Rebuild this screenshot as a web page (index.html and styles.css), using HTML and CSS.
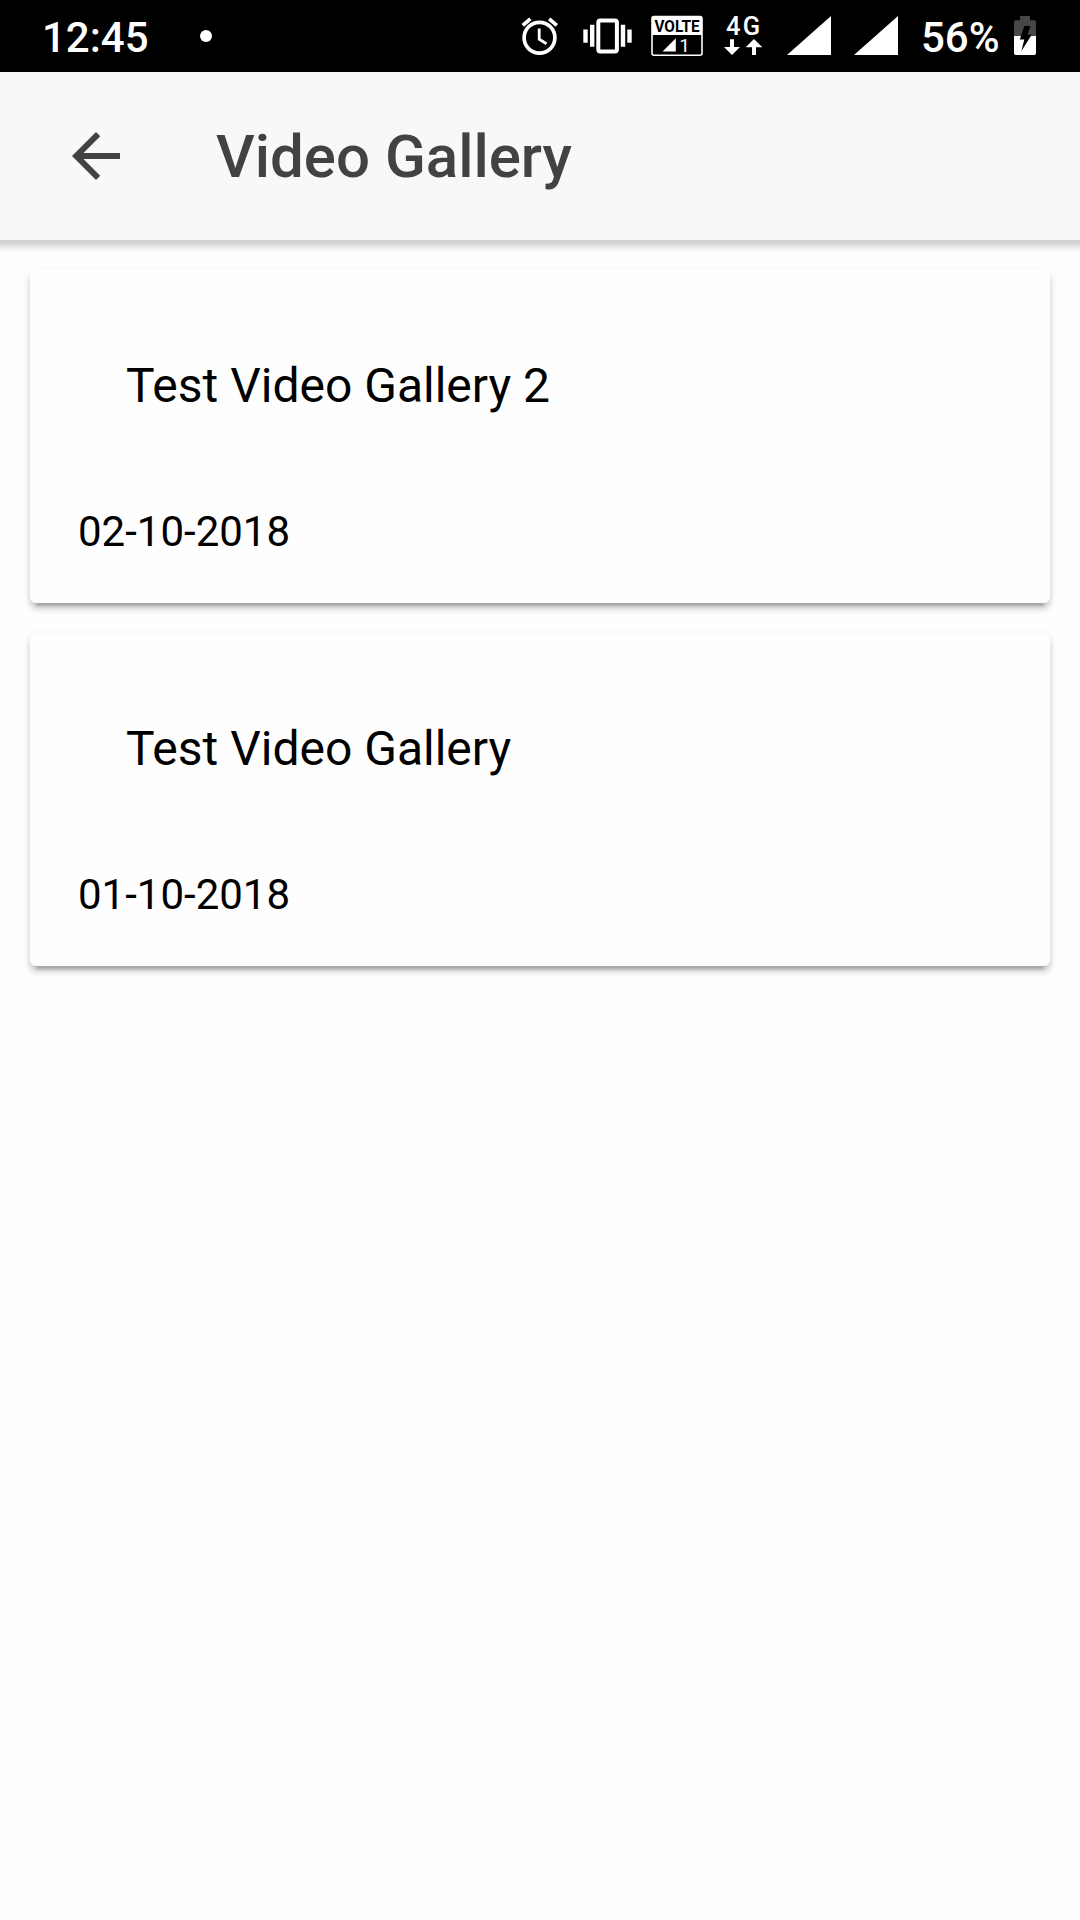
FILE: index.html
```html
<!DOCTYPE html>
<html lang="en">
<head>
<meta charset="utf-8">
<title>Video Gallery</title>
<link rel="stylesheet" href="styles.css">
</head>
<body>
<div class="status-bar">
  <span class="clock">12:45</span>
  <span class="notification-dot"></span>
  <div class="status-icons">
    <svg class="alarm" width="38" height="72" viewBox="521 0 38 72" fill="none" stroke="#fff">
      <circle cx="539.5" cy="37.7" r="15.4" stroke-width="3.7"/>
      <path d="M539.2 28.5v10.8l7.3 4.4" stroke-width="2.8"/>
      <path d="M522.8 25.4l7.6-6.5M556.8 25.4l-7.6-6.5" stroke-width="3.8"/>
    </svg>
    <svg class="vibrate" width="50" height="72" viewBox="583 0 50 72" fill="#fff">
      <rect x="598.3" y="20.4" width="18.6" height="31.2" rx="2" fill="none" stroke="#fff" stroke-width="4"/>
      <path d="M583.3 29.5h4.4v13.2h-4.4zM590 24.8h4.4v22H590zM620.8 24.8h4.4v22h-4.4zM627.3 29.5h4.4v13.2h-4.4z"/>
    </svg>
    <svg class="volte" width="52" height="72" viewBox="651 0 52 72" fill="#fff">
      <rect x="652" y="16.6" width="50" height="38.6" rx="2" fill="none" stroke="#fff" stroke-width="1.6"/>
      <path d="M652 18q0-1.5 2-1.5h46q2 0 2 1.5v17h-50zM662.5 51.5l13.3-13.3v13.3z"/>
      <text x="677" y="32" class="volte-label" textLength="45" lengthAdjust="spacingAndGlyphs">VOLTE</text>
      <text x="684.5" y="52" class="sim-number">1</text>
    </svg>
    <svg class="network" width="40" height="72" viewBox="723 0 40 72" fill="#fff">
      <text x="726" y="34.7" class="network-label" textLength="34">4G</text>
      <path d="M730 39.2h4V47h6l-8 8-8-8h6zM752 55h4v-7.8h6.3L754 39l-8.3 8.2h6.3z"/>
    </svg>
    <svg class="signal" width="44" height="72" viewBox="787 0 44 72" fill="#fff"><path d="M787 55l44-39v39z"/></svg>
    <svg class="signal" width="44" height="72" viewBox="787 0 44 72" fill="#fff"><path d="M787 55l44-39v39z"/></svg>
    <span class="battery-level">56%</span>
    <svg class="battery" width="22" height="72" viewBox="1014 0 22 72">
      <path d="M1014 36V22q0-1.7 1.7-1.7h4.3V16h10v4.3h4.3q1.7 0 1.7 1.7v14z" fill="#474747"/>
      <path d="M1014 36h22v17.3q0 1.7-1.7 1.7h-18.6q-1.7 0-1.7-1.7z" fill="#fff"/>
      <path d="M1024.3 26h6.2l-3 8.7h4.2l-10.4 16.5 3-11.6h-4.5z" fill="#000"/>
    </svg>
  </div>
</div>
<header class="toolbar">
  <svg class="back" width="48" height="48" viewBox="4 4 16 16" fill="#424242"><path d="M20 11H7.83l5.59-5.59L12 4l-8 8 8 8 1.41-1.41L7.83 13H20z"/></svg>
  <h1 class="toolbar-title">Video Gallery</h1>
</header>
<main class="content">
  <article class="card">
    <h2 class="card-title">Test Video Gallery 2</h2>
    <p class="card-date">02-10-2018</p>
  </article>
  <article class="card">
    <h2 class="card-title">Test Video Gallery</h2>
    <p class="card-date">01-10-2018</p>
  </article>
</main>
</body>
</html>
```
FILE: styles.css
```css
* { box-sizing: border-box; }
body {
  margin: 0;
  min-height: 1920px;
  background: #fefefe;
  color: #000;
  font-family: Roboto, sans-serif;
}
svg { display: block; flex: none; }

.status-bar {
  display: flex;
  align-items: center;
  height: 72px;
  padding: 0 44px 0 42px;
  background: #000;
  color: #fff;
  font-size: 42px;
  font-weight: 500;
  line-height: 68px;
}
.clock { width: 158px; padding-top: 4px; }
.notification-dot {
  width: 12px;
  height: 12px;
  border-radius: 50%;
  background: #fff;
}
.status-icons { display: flex; margin-left: auto; }
.vibrate { margin-left: 24px; }
.volte { margin-left: 18px; }
.network { margin-left: 20px; }
.signal { margin-left: 24px; }
.signal + .signal { margin-left: 23px; }
.battery-level { width: 93px; margin-left: 23px; padding-top: 4px; }
.volte-label { font-size: 16px; font-weight: 700; fill: #000; text-anchor: middle; }
.sim-number { font-size: 19px; font-weight: 400; text-anchor: middle; }
.network-label { font-size: 25.5px; font-weight: 500; }

.toolbar {
  position: relative;
  display: flex;
  align-items: center;
  gap: 96px;
  height: 168px;
  padding: 0 72px;
  background: #f8f8f8;
}
.toolbar::after {
  content: "";
  position: absolute;
  top: 100%;
  left: 0;
  right: 0;
  height: 15px;
  background: linear-gradient(#cecece, #d5d5d5 20%, #ebebeb 50%, #f9f9f9 75%, #fefefe);
}
.toolbar-title {
  margin: 0;
  padding-top: 2px;
  color: #424242;
  font-size: 60px;
  font-weight: 500;
  line-height: 70px;
}

.content {
  display: flex;
  flex-direction: column;
  gap: 30px;
  padding: 30px;
}
.card {
  height: 333px;
  padding: 88px 48px 0;
  border-radius: 6px;
  background: #fefefe;
  box-shadow: 0 6px 6px rgba(0, 0, 0, .14), 0 9px 3px -6px rgba(0, 0, 0, .2), 0 3px 9px rgba(0, 0, 0, .1);
}
.card-title {
  margin: 0 0 86px;
  padding-left: 48px;
  font-size: 48px;
  font-weight: 400;
  line-height: 56px;
}
.card-date {
  margin: 0;
  font-size: 42px;
  line-height: 63px;
}
```
